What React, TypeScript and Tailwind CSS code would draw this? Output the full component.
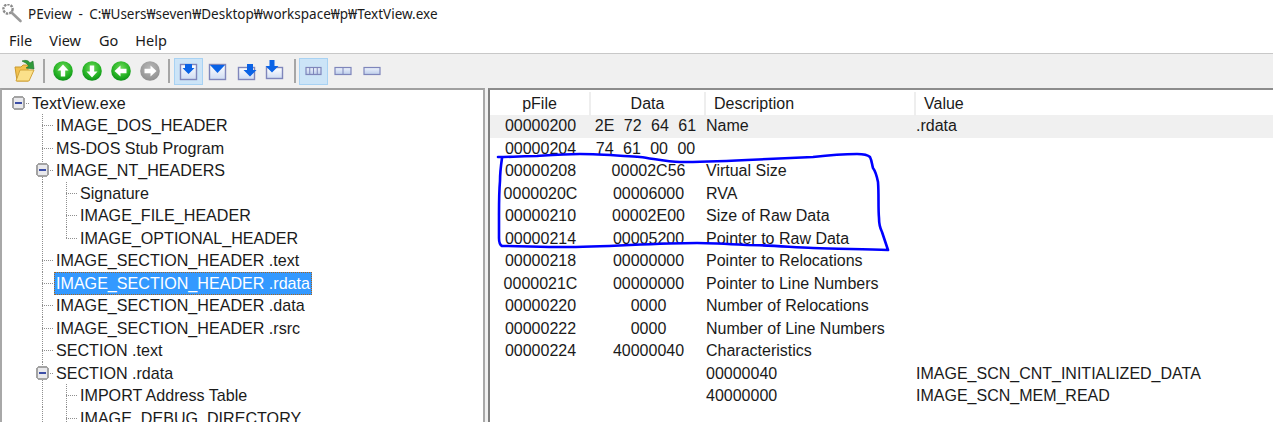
import React from "react";

const sans = "[font-family:'Liberation_Sans',Arial,sans-serif]";

type Kind = "blank" | "pipe" | "tee" | "ell" | "box" | "rootbox";

function Cell({ kind }: { kind: Kind }) {
  const dots = { stroke: "#8f8f8f", strokeWidth: 1, strokeDasharray: "1 1" };
  return (
    <svg width="24" height="23" viewBox="0 0 24 23" className="shrink-0" shapeRendering="crispEdges">
      {(kind === "pipe" || kind === "tee" || kind === "box") && <line x1="12.5" y1="0" x2="12.5" y2="23" {...dots} />}
      {kind === "ell" && <line x1="12.5" y1="0" x2="12.5" y2="12" {...dots} />}
      {(kind === "tee" || kind === "ell") && <line x1="12" y1="11.5" x2="25" y2="11.5" {...dots} />}
      {(kind === "box" || kind === "rootbox") && (
        <g>
          <line x1="18" y1="11.5" x2="25" y2="11.5" {...dots} />
          <rect x="7" y="5" width="11" height="12" rx="1.5" fill="#e9e9ec" stroke="#a3a3a3" strokeWidth="1.6" />
          <rect x="9" y="10" width="7" height="2" fill="#3c4ea6" />
        </g>
      )}
    </svg>
  );
}

const tree: { cells: Kind[]; label: string; selected?: boolean }[] = [
  { cells: ["rootbox"], label: "TextView.exe" },
  { cells: ["blank", "tee"], label: "IMAGE_DOS_HEADER" },
  { cells: ["blank", "tee"], label: "MS-DOS Stub Program" },
  { cells: ["blank", "box"], label: "IMAGE_NT_HEADERS" },
  { cells: ["blank", "pipe", "tee"], label: "Signature" },
  { cells: ["blank", "pipe", "tee"], label: "IMAGE_FILE_HEADER" },
  { cells: ["blank", "pipe", "ell"], label: "IMAGE_OPTIONAL_HEADER" },
  { cells: ["blank", "tee"], label: "IMAGE_SECTION_HEADER .text" },
  { cells: ["blank", "tee"], label: "IMAGE_SECTION_HEADER .rdata", selected: true },
  { cells: ["blank", "tee"], label: "IMAGE_SECTION_HEADER .data" },
  { cells: ["blank", "tee"], label: "IMAGE_SECTION_HEADER .rsrc" },
  { cells: ["blank", "tee"], label: "SECTION .text" },
  { cells: ["blank", "box"], label: "SECTION .rdata" },
  { cells: ["blank", "pipe", "tee"], label: "IMPORT Address Table" },
  { cells: ["blank", "pipe", "tee"], label: "IMAGE_DEBUG_DIRECTORY" },
];

const rows: { p: string; d: string; desc: string; v?: string; bg?: boolean; spaced?: boolean }[] = [
  { p: "00000200", d: "2E 72 64 61", desc: "Name", v: ".rdata", bg: true, spaced: true },
  { p: "00000204", d: "74 61 00 00", desc: "", spaced: true },
  { p: "00000208", d: "00002C56", desc: "Virtual Size" },
  { p: "0000020C", d: "00006000", desc: "RVA" },
  { p: "00000210", d: "00002E00", desc: "Size of Raw Data" },
  { p: "00000214", d: "00005200", desc: "Pointer to Raw Data" },
  { p: "00000218", d: "00000000", desc: "Pointer to Relocations" },
  { p: "0000021C", d: "00000000", desc: "Pointer to Line Numbers" },
  { p: "00000220", d: "0000", desc: "Number of Relocations" },
  { p: "00000222", d: "0000", desc: "Number of Line Numbers" },
  { p: "00000224", d: "40000040", desc: "Characteristics" },
  { p: "", d: "", desc: "00000040", v: "IMAGE_SCN_CNT_INITIALIZED_DATA" },
  { p: "", d: "", desc: "40000000", v: "IMAGE_SCN_MEM_READ" },
];

function Round({ dir, off }: { dir: number; off?: boolean }) {
  const id = off ? "gGray" : "gGreen";
  return (
    <svg width="22" height="22" viewBox="0 0 22 22">
      <defs>
        <radialGradient id="gGreen" cx="50%" cy="35%" r="65%">
          <stop offset="0" stopColor="#6fdc5a" />
          <stop offset="0.7" stopColor="#22b022" />
          <stop offset="1" stopColor="#0f8f1a" />
        </radialGradient>
        <radialGradient id="gGray" cx="50%" cy="35%" r="65%">
          <stop offset="0" stopColor="#b9b9b9" />
          <stop offset="1" stopColor="#8f8f8f" />
        </radialGradient>
      </defs>
      <circle cx="11" cy="11" r="9.8" fill={`url(#${id})`} />
      <path
        d="M11 4.5 L16.5 10.5 H13.2 V16.5 H8.8 V10.5 H5.5 Z"
        fill="#fff"
        transform={`rotate(${dir} 11 11)`}
      />
    </svg>
  );
}

function Folder() {
  return (
    <svg width="24" height="26" viewBox="0 0 24 26">
      <path d="M2 9 H8 L10 7 H15 V23 H4 Z" fill="#f2c14e" stroke="#c99a2e" />
      <path d="M3 23 L7 12 H21 L16 23 Z" fill="#fbe08a" stroke="#d2a43a" />
      <path d="M9 3 Q15 1 17 5 L20 3 L21 11 L13 10 L16 8 Q14 5 9 3 Z" fill="#2f9a3a" stroke="#1d6e28" strokeWidth="0.6" />
    </svg>
  );
}

const Box = ({ x, y, w, h }: { x: number; y: number; w: number; h: number }) => (
  <rect x={x} y={y} width={w} height={h} fill="url(#gWin)" stroke="#7f86bb" strokeWidth="1.4" />
);

function Win({ type }: { type: number }) {
  return (
    <svg width="24" height="24" viewBox="0 0 24 24">
      <defs>
        <linearGradient id="gWin" x1="0" y1="0" x2="0" y2="1">
          <stop offset="0" stopColor="#ffffff" />
          <stop offset="1" stopColor="#cfdcf3" />
        </linearGradient>
      </defs>
      {type === 0 && (
        <g>
          <Box x={3.5} y={5.5} w={16} h={15} />
          <path d="M8 5 H15 V9 H17.5 L11.5 15 L5.5 9 H8 Z" fill="#0a63e6" />
        </g>
      )}
      {type === 1 && (
        <g>
          <Box x={3.5} y={5.5} w={16} h={15} />
          <path d="M4 6 H19 L11.5 14 Z" fill="#0a63e6" />
        </g>
      )}
      {type === 2 && (
        <g>
          <Box x={3.5} y={8.5} w={16} h={12} />
          <path d="M12 5 H18 V11 H21.5 L15 17.5 L8.5 11 H12 Z" fill="#0a63e6" />
        </g>
      )}
      {type === 3 && (
        <g>
          <Box x={2.5} y={8.5} w={16} h={11} />
          <path d="M5.5 1 H10.5 V7 H14.5 L8 13.5 L1.5 7 H5.5 Z" fill="#0a63e6" />
        </g>
      )}
    </svg>
  );
}

function Bars({ n }: { n: number }) {
  const w = n === 4 ? 15 : 16;
  return (
    <svg width="18" height="10" viewBox="0 0 18 10">
      <defs>
        <linearGradient id="gBar" x1="0" y1="0" x2="0" y2="1">
          <stop offset="0" stopColor="#eef3fc" />
          <stop offset="1" stopColor="#bccdea" />
        </linearGradient>
      </defs>
      <rect x="1" y="1.5" width={w} height="7" fill="url(#gBar)" stroke="#7f86bb" strokeWidth="1.2" />
      {Array.from({ length: n - 1 }).map((_, i) => (
        <line key={i} x1={1 + (w * (i + 1)) / n} x2={1 + (w * (i + 1)) / n} y1="2" y2="8" stroke="#7f86bb" />
      ))}
    </svg>
  );
}

const Btn = ({ children, on }: { children: React.ReactNode; on?: boolean }) => (
  <div
    className={`flex h-[27px] w-[29px] shrink-0 items-center justify-center border ${
      on ? "border-[#a8d2f3] bg-[#cce4f7]" : "border-transparent"
    }`}
  >
    {children}
  </div>
);

const Sep = ({ w }: { w: string }) => (
  <div className={`flex h-full shrink-0 items-center justify-center ${w}`}>
    <div className="h-[24px] w-[2px] bg-[#a6a6a6]" />
  </div>
);

function Stroke() {
  return (
    <svg className="pointer-events-none absolute left-0 top-0" width="1273" height="422" viewBox="0 0 1273 422">
      <path
        d="M498 157 C512 157 525 156 537 156 C552 155 566 154 580 154 C600 154 622 156 640 157 C655 159 668 162 680 162 C702 162 725 161 747 160 C770 159 792 158 813 157 C830 155 845 154 857 154 C863 154 868 155 870 157 C872 161 872 165 873 168 C876 172 877 177 878 182 C879 195 878 207 879 218 C879 224 880 228 882 232 C884 238 886 244 888 250 C863 249 838 249 813 248 C790 247 768 245 747 245 C730 244 713 243 697 243 C675 243 652 244 630 245 C608 246 585 247 563 247 C542 247 520 246 502 246 C500 245 499 242 499 238 C499 230 499 222 499 215 C499 204 499 192 500 181 C500 172 501 165 502 158"
        fill="none"
        stroke="#0000ff"
        strokeWidth="2.6"
        strokeLinecap="round"
        strokeLinejoin="round"
      />
    </svg>
  );
}

export default function App() {
  return (
    <div className={`relative flex h-[422px] w-[1273px] flex-col overflow-hidden bg-white ${sans} text-[#1a1a1a]`}>
      {/* title bar */}
      <div className="flex h-[29px] shrink-0 items-center pl-[2px] text-[13.5px] [word-spacing:3px] font-['Noto_Sans','Noto_Sans_CJK_KR',sans-serif]">
        <svg width="22" height="22" viewBox="0 0 22 22" className="shrink-0">
          <circle cx="6" cy="5" r="4.6" fill="#fff" fillOpacity="0.6" stroke="#8b8b8b" strokeWidth="2.4" strokeDasharray="2.4 1" />
          <path d="M9.5 8.5 L18.5 17" stroke="#9a9a9a" strokeWidth="2.6" strokeLinecap="round" />
        </svg>
        <span className="ml-[4px] whitespace-pre">PEview - C:₩Users₩seven₩Desktop₩workspace₩p₩TextView.exe</span>
      </div>

      {/* menu bar */}
      <div className="flex h-[25px] shrink-0 items-center border-b border-[#c8c8c8] text-[14.5px] font-['Noto_Sans',sans-serif]">
        <span className="ml-[9px]">File</span>
        <span className="ml-[17px]">View</span>
        <span className="ml-[18px]">Go</span>
        <span className="ml-[17px]">Help</span>
      </div>

      {/* toolbar */}
      <div className="flex h-[34px] shrink-0 items-center bg-[#f0f0f0] pl-[10px]">
        <Btn><Folder /></Btn>
        <Sep w="w-[9px]" />
        <Btn><Round dir={0} /></Btn>
        <Btn><Round dir={180} /></Btn>
        <Btn><Round dir={270} /></Btn>
        <Btn><Round dir={90} off /></Btn>
        <Sep w="w-[10px]" />
        <Btn on><Win type={0} /></Btn>
        <Btn><Win type={1} /></Btn>
        <Btn><Win type={2} /></Btn>
        <Btn><Win type={3} /></Btn>
        <Sep w="w-[9px]" />
        <Btn on><Bars n={4} /></Btn>
        <Btn><Bars n={2} /></Btn>
        <Btn><Bars n={1} /></Btn>
      </div>

      {/* panes */}
      <div className="flex min-h-0 flex-1 bg-[#f0f0f0]">
        <div className="h-full w-[485px] shrink-0 overflow-hidden border-l-2 border-r-2 border-t-2 border-l-[#a8a8a8] border-r-[#a8a8a8] border-t-[#a0a0a0] bg-white pl-[4px] pt-[2px] text-[16.1px]">
          {tree.map((r) => (
            <div key={r.label} className="flex h-[22.5px] items-center">
              {r.cells.map((c, i) => (
                <Cell key={i} kind={c} />
              ))}
              <span
                className={`whitespace-nowrap border px-[1px] leading-[21px] ${
                  r.selected ? "border-dotted border-[#a8641e] bg-[#3399ff] text-white" : "border-transparent"
                }`}
              >
                {r.label}
              </span>
            </div>
          ))}
        </div>
        <div className="ml-[3px] h-full min-w-0 flex-1 overflow-hidden border-l-2 border-t-2 border-l-[#808080] border-t-[#8c8c8c] bg-white text-[16px]">
          <div className="flex h-[25px] items-center pt-[2px]">
            <div className="w-[101px] border-r-2 border-[#eeeeee] text-center">pFile</div>
            <div className="w-[115px] border-r-2 border-[#eeeeee] text-center">Data</div>
            <div className="w-[210px] border-r-2 border-[#eeeeee] pl-[8px]">Description</div>
            <div className="flex-1 pl-[8px]">Value</div>
          </div>
          {rows.map((r, i) => (
            <div key={i} className={`flex h-[22.5px] items-center ${r.bg ? "bg-[#f0f0f0]" : ""}`}>
              <div className="w-[101px] text-center">{r.p}</div>
              <div className={`w-[115px] text-center ${r.spaced ? "pr-[6px] [word-spacing:5px]" : ""}`}>{r.d}</div>
              <div className="w-[210px]">{r.desc}</div>
              <div className="flex-1">{r.v}</div>
            </div>
          ))}
        </div>
      </div>

      <Stroke />
    </div>
  );
}
